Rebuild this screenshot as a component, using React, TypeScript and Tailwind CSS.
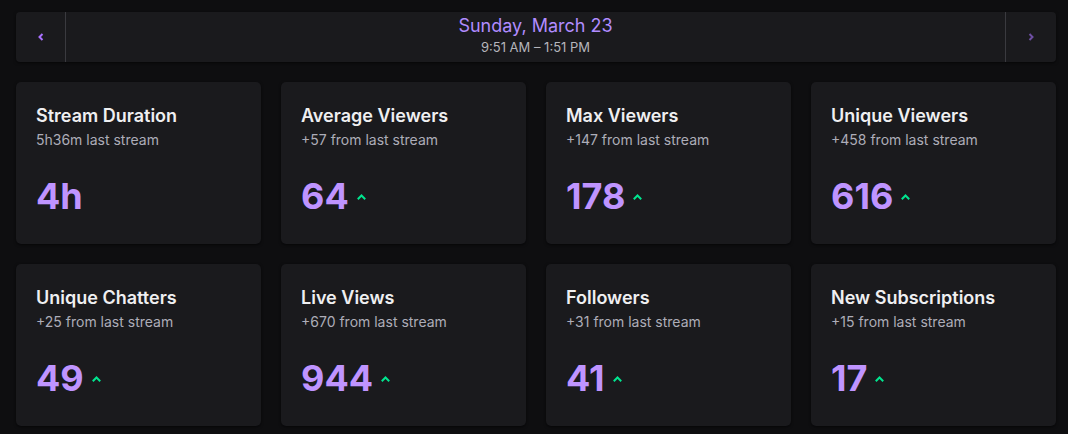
import React from "react";

const stats = [
  { title: "Stream Duration", sub: "5h36m last stream", value: "4h", up: false },
  { title: "Average Viewers", sub: "+57 from last stream", value: "64", up: true },
  { title: "Max Viewers", sub: "+147 from last stream", value: "178", up: true },
  { title: "Unique Viewers", sub: "+458 from last stream", value: "616", up: true },
  { title: "Unique Chatters", sub: "+25 from last stream", value: "49", up: true },
  { title: "Live Views", sub: "+670 from last stream", value: "944", up: true },
  { title: "Followers", sub: "+31 from last stream", value: "41", up: true },
  { title: "New Subscriptions", sub: "+15 from last stream", value: "17", up: true },
];

function Caret() {
  return (
    <svg width="9" height="6" viewBox="0 0 9 6" className="ml-[8px] mt-[2px]">
      <path d="M1.5 4.5 L4.5 1.5 L7.5 4.5" fill="none" stroke="#00e58f" strokeWidth="2" strokeLinecap="square" />
    </svg>
  );
}

export default function App() {
  return (
    <div className="h-[434px] overflow-hidden bg-[#0e0e10] pl-4 pr-3 pt-3" style={{ fontFamily: "Inter, 'Noto Sans', sans-serif" }}>
      <div className="flex h-[50px] items-stretch rounded-sm bg-[#1a1a1d] shadow-[0_1px_3px_rgba(0,0,0,0.6)]">
        <div className="flex w-[50px] items-center justify-center border-r border-[#3a3a3f]">
          <svg width="6" height="8" viewBox="0 0 6 8">
            <path d="M4.5 1 L1.5 4 L4.5 7" fill="none" stroke="#a970ff" strokeWidth="2" />
          </svg>
        </div>
        <div className="flex flex-1 flex-col items-center pt-[3px]">
          <div className="text-[18px] leading-[22px] text-[#b18cff]">Sunday, March 23</div>
          <div className="mt-[2px] text-[13px] leading-[16px] text-[#b5b5bb]">9:51 AM – 1:51 PM</div>
        </div>
        <div className="flex w-[51px] items-center justify-center border-l border-[#3a3a3f]">
          <svg width="6" height="8" viewBox="0 0 6 8">
            <path d="M1.5 1 L4.5 4 L1.5 7" fill="none" stroke="#6e4fa3" strokeWidth="2" />
          </svg>
        </div>
      </div>
      <div className="mt-5 grid grid-cols-4 gap-5">
        {stats.map((s) => (
          <div key={s.title} className="h-[162px] rounded-[5px] bg-[#1a1a1d] px-5 pt-[23px] shadow-[0_1px_3px_rgba(0,0,0,0.6)]">
            <div className="text-[18px] font-semibold leading-[22px] text-[#efeff1]">{s.title}</div>
            <div className="mt-[4px] text-[14px] leading-[18px] text-[#adadb8]">{s.sub}</div>
            <div className="mt-[27px] flex items-center">
              <span className="text-[36px] font-bold leading-[40px] text-[#bf94ff]">{s.value}</span>
              {s.up && <Caret />}
            </div>
          </div>
        ))}
      </div>
    </div>
  );
}
